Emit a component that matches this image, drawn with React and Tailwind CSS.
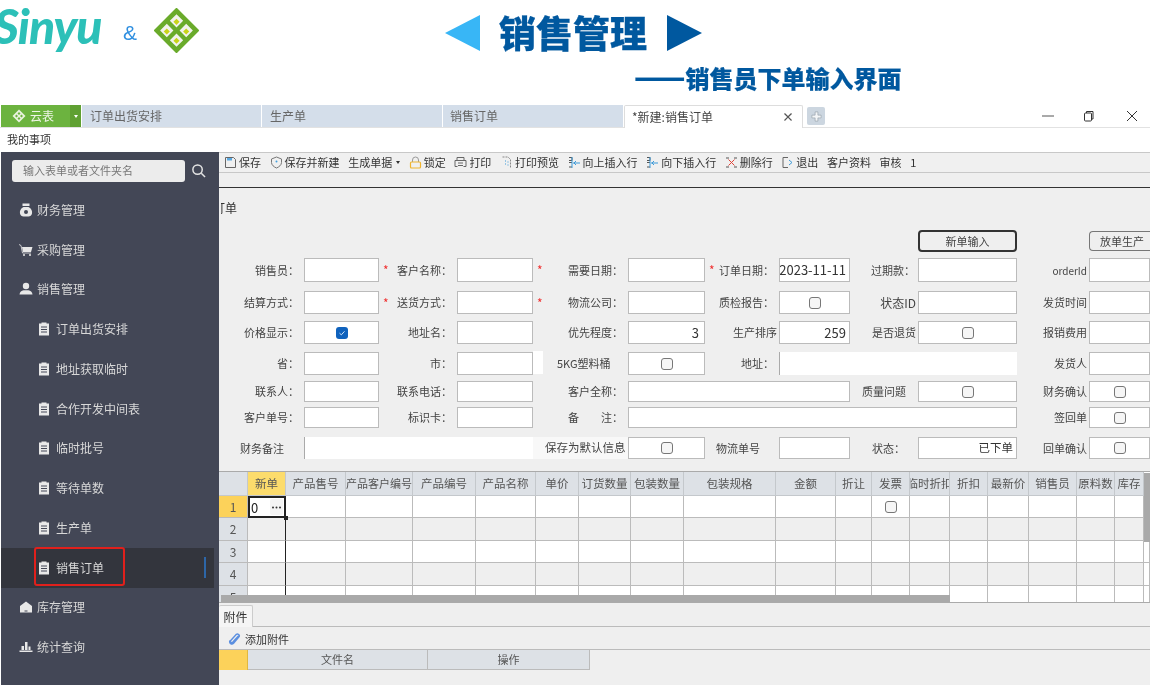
import React from "react";

const tableCols =
  "grid grid-cols-[29px_38px_60px_67px_63px_60px_43px_52px_53px_92px_60px_36px_38px_40px_38px_41px_48px_38px_29px_6px]";

const headers = ["", "新单", "产品售号", "产品客户编号", "产品编号", "产品名称", "单价", "订货数量", "包装数量", "包装规格", "金额", "折让", "发票", "临时折扣", "折扣", "最新价", "销售员", "原料数", "库存", ""];

function Check({ on }) {
  if (on) {
    return (
      <span className="flex h-[12px] w-[12px] items-center justify-center rounded-[3px] bg-[#0f62bd]">
        <svg viewBox="0 0 12 12" className="h-[10px] w-[10px]" fill="none" stroke="#cfe3f7" strokeWidth="1.2">
          <path d="M3 6.2 5.2 8.2 9 4" />
        </svg>
      </span>
    );
  }
  return <span className="block h-[12px] w-[12px] rounded-[3px] border border-[#777] bg-[#f6f6f6]" />;
}

function Label({ children, star, pad = "pr-[5px]", row = "justify-end", bg = "" }) {
  return (
    <div className={`flex h-full items-center whitespace-nowrap text-[11px] text-[#444] ${pad} ${bg} ${star ? "justify-between" : row}`}>
      {star && <span className="pl-[4px] text-[12px] leading-none text-[#f03030]">*</span>}
      <span>{children}</span>
    </div>
  );
}

function Field({ children, span = "", align = "justify-end", clean }) {
  return (
    <div
      className={`flex h-full items-center overflow-hidden bg-white whitespace-nowrap px-[3px] text-[13px] text-[#333] ${align} ${span} ${
        clean ? "border-l border-l-[#aaa]" : "border border-[#bbb]"
      }`}
    >
      {children}
    </div>
  );
}

function CheckField({ on }) {
  return (
    <Field align="justify-center">
      <Check on={on} />
    </Field>
  );
}

function Tool({ icon, children, caret }) {
  return (
    <div className="flex items-center gap-[2px] whitespace-nowrap text-[11px] text-[#333]">
      {icon}
      <span>{children}</span>
      {caret && <span className="ml-[2px] h-0 w-0 border-x-[2.5px] border-t-[3px] border-x-transparent border-t-[#333]" />}
    </div>
  );
}

const ico = "h-[13px] w-[13px] shrink-0";

const toolIcons = {
  save: (
    <svg viewBox="0 0 13 13" className={ico} fill="none">
      <path d="M1.5 1.5h8l2 2v8h-10z" stroke="#666" />
      <rect x="3" y="2" width="5" height="2.5" fill="#5aa8e0" />
    </svg>
  ),
  shield: (
    <svg viewBox="0 0 13 13" className={ico} fill="none">
      <path d="M6.5 1 11.5 3v3.5c0 2.5-2.5 4.5-5 5.5-2.5-1-5-3-5-5.5V3z" stroke="#777" />
      <circle cx="6.5" cy="5.5" r="1" fill="#45a0dc" />
    </svg>
  ),
  lock: (
    <svg viewBox="0 0 13 13" className={ico} fill="none">
      <path d="M3.5 6V4a3 3 0 0 1 6 0v2" stroke="#999" />
      <rect x="1.5" y="6" width="10" height="6" rx="1" stroke="#f0b52e" strokeWidth="1.2" />
    </svg>
  ),
  print: (
    <svg viewBox="0 0 13 13" className={ico} fill="none" stroke="#666">
      <path d="M3 4V1.5h7V4M1 4.5h11v6H9.5M1 4.5v6h2.5" />
      <path d="M4 7h5M4 9.5h5" />
    </svg>
  ),
  preview: (
    <svg viewBox="0 0 13 13" className={ico} fill="none">
      <path d="M2.5 1h5.5l2.5 2.5V12" stroke="#888" strokeDasharray="2 1" />
      <path d="M5 5h1M7.5 6h1M5 8h1M7.5 9h1" stroke="#3d9ad8" />
    </svg>
  ),
  up: (
    <svg viewBox="0 0 13 13" className={ico} fill="none">
      <path d="M1 1.5h3v3H1M1 6.5h3M1 11h3" stroke="#555" />
      <path d="M4 1v11M5 7h7M8 5 6 7l2 2" stroke="#3d9ad8" />
    </svg>
  ),
  del: (
    <svg viewBox="0 0 13 13" className={ico} fill="none">
      <path d="M1 2h3M9 2h3M1 11h3M9 11h3" stroke="#555" />
      <path d="M3.5 3.5l6 6M9.5 3.5l-6 6" stroke="#e0453a" />
    </svg>
  ),
  exit: (
    <svg viewBox="0 0 13 13" className={ico} fill="none">
      <path d="M7 1.5H2v10h5" stroke="#666" />
      <path d="M8 4l3 2.5L8 9" stroke="#3d9ad8" />
    </svg>
  ),
};

const sideIcons = {
  money: (
    <svg viewBox="0 0 14 14" className="h-[14px] w-[14px]" fill="#e8e8e8">
      <rect x="3.5" y="0.5" width="7" height="2.5" />
      <path d="M4.5 4h5c3 1.5 4 4 3.5 6.5-.3 1.8-2 3-3.5 3h-5C3 13.500 1.300 12.300 1 10.500.5 8 1.500 5.500 4.500 4z" />
      <circle cx="7" cy="9" r="2" fill="#434756" />
    </svg>
  ),
  cart: (
    <svg viewBox="0 0 14 14" className="h-[14px] w-[14px]" fill="none" stroke="#e8e8e8">
      <path d="M0 1.500 2 2.500 3.500 10H12" strokeWidth="0.8" />
      <path d="M3 4h10.500l-1.500 5H4z" fill="#e8e8e8" stroke="none" />
      <circle cx="5" cy="12" r="1" fill="#e8e8e8" stroke="none" />
      <circle cx="11" cy="12" r="1" fill="#e8e8e8" stroke="none" />
    </svg>
  ),
  user: (
    <svg viewBox="0 0 14 14" className="h-[14px] w-[14px]" fill="#e8e8e8">
      <circle cx="7" cy="4" r="3.200" />
      <path d="M0.500 12.500c.3-2.500 2-3.800 4-4.200h5c2 .4 3.700 1.700 4 4.200z" />
    </svg>
  ),
  home: (
    <svg viewBox="0 0 14 14" className="h-[14px] w-[14px]" fill="#e8e8e8">
      <path d="M7 1.500 13 6v6.500H1V6z" />
      <rect x="5.500" y="10.500" width="3" height="1" fill="#434756" />
    </svg>
  ),
  chart: (
    <svg viewBox="0 0 14 14" className="h-[14px] w-[14px]" fill="#e8e8e8">
      <rect x="0.500" y="10.500" width="13" height="1.500" />
      <rect x="2.500" y="6" width="2.500" height="4" />
      <rect x="6" y="2" width="2.500" height="8" />
      <rect x="9.500" y="6.500" width="2" height="3.500" />
    </svg>
  ),
  doc: (
    <svg viewBox="0 0 12 14" className="h-[14px] w-[12px]">
      <path d="M1 1.500h2.500V.5h5v1H11V13.500H1z" fill="#e8e8e8" />
      <path d="M3 5h6M3 7.500h6M3 10h6" stroke="#434756" strokeWidth="1" />
    </svg>
  ),
};

const menu = [
  { t: "财务管理", i: "money" },
  { t: "采购管理", i: "cart" },
  { t: "销售管理", i: "user" },
  { t: "订单出货安排", sub: true },
  { t: "地址获取临时", sub: true },
  { t: "合作开发中间表", sub: true },
  { t: "临时批号", sub: true },
  { t: "等待单数", sub: true },
  { t: "生产单", sub: true },
  { t: "销售订单", sub: true, active: true },
  { t: "库存管理", i: "home" },
  { t: "统计查询", i: "chart" },
];

function Sidebar() {
  return (
    <aside className="ml-px w-[218px] shrink-0 bg-[#434756]">
      <div className="flex h-[38px] items-center pb-px pl-[11px]">
        <div className="flex h-[22px] w-[173px] items-center rounded-[3px] bg-[#ececec] pl-[11px] text-[11px] text-[#777]">输入表单或者文件夹名</div>
        <svg viewBox="0 0 16 16" className="ml-[6px] h-[15px] w-[15px]" fill="none" stroke="#e4e4e4" strokeWidth="1.600">
          <circle cx="7" cy="7" r="5" />
          <path d="M11 11l4 4" />
        </svg>
      </div>
      {menu.map((m) => (
        <div
          key={m.t}
          className={`relative flex h-[39.75px] items-center text-[12px] text-[#d8d8d8] ${m.sub ? "pl-[37px]" : "pl-[18px]"} ${m.active ? "mr-[5px] bg-[#33353d]" : ""}`}
        >
          <span className="flex w-[18px] justify-start">{sideIcons[m.i || "doc"]}</span>
          <span>{m.t}</span>
          {m.active && (
            <>
              <span className="absolute left-[33px] top-[-1px] h-[39px] w-[91px] rounded-[3px] border-2 border-[#e0201c]" />
              <span className="absolute left-[203px] top-[9px] h-[21px] w-[2px] bg-[#2d66a8]" />
            </>
          )}
        </div>
      ))}
    </aside>
  );
}

// every child of a form row gets that row's height, the rest of the track stays empty
function Cells({ h, children }) {
  return React.Children.map(children, (c) => {
    const span = c.props.span || "";
    return <div className={`${h} ${span}`}>{c}</div>;
  });
}

function Form() {
  return (
    <div className="grid h-[241px] grid-cols-[85px_75px_78px_76px_95px_77px_74px_71px_68px_99px_72px_61px] grid-rows-[28px_33px_30px_31px_29px_26px_30px_34px]">
      {/* buttons */}
      <div className="col-start-10 h-[22px] rounded-[4px] border-2 border-[#333] text-center text-[11px] leading-[18px] text-[#444]">新单输入</div>
      <div className="col-start-12 mt-px h-[20px] rounded-l-[4px] border-y border-l border-[#777] pl-[10px] text-[11px] leading-[18px] whitespace-nowrap text-[#444]">放单生产</div>

      <Cells h="h-[24px]">
        <Label>销售员：</Label><Field />
        <Label star>客户名称：</Label><Field />
        <Label star>需要日期：</Label><Field />
        <Label star>订单日期：</Label><Field>2023-11-11</Field>
        <Label pad="pr-[3px]">过期款：</Label><Field />
        <Label pad="pr-[2px]"><span className="text-[10px]">orderId</span></Label><Field />
      </Cells>
      <Cells h="h-[23px]">
        <Label>结算方式：</Label><Field />
        <Label star>送货方式：</Label><Field />
        <Label star>物流公司：</Label><Field />
        <Label>质检报告：</Label><CheckField />
        <Label pad="pr-[2px]"><span className="text-[12px]">状态ID</span></Label><Field />
        <Label pad="pr-[2px]">发货时间</Label><Field />
      </Cells>
      <Cells h="h-[23px]">
        <Label>价格显示：</Label><CheckField on />
        <Label>地址名：</Label><Field />
        <Label>优先程度：</Label><Field><span className="pr-[2px]">3</span></Field>
        <Label pad="pr-[2px]">生产排序</Label><Field>259</Field>
        <Label pad="pr-[2px]">是否退货</Label><CheckField />
        <Label pad="pr-[2px]">报销费用</Label><Field />
      </Cells>
      <Cells h="h-[23px]">
        <Label>省：</Label><Field />
        <Label>市：</Label><Field />
        <Label row="justify-start" pad="pl-[24px]">
          <span className="relative">
            <span className="absolute -left-[24px] -top-[4px] h-[23px] w-[10px] bg-white" />
            5KG塑料桶
          </span>
        </Label>
        <CheckField />
        <Label>地址：</Label><Field span="col-span-3" clean />
        <Label pad="pr-[2px]">发货人</Label><Field />
      </Cells>
      <Cells h="h-[21px]">
        <Label>联系人：</Label><Field />
        <Label>联系电话：</Label><Field />
        <Label>客户全称：</Label><Field span="col-span-3" />
        <Label row="justify-start" pad="pl-[12px]">质量问题</Label><CheckField />
        <Label pad="pr-[2px]">财务确认</Label><CheckField />
      </Cells>
      <Cells h="h-[21px]">
        <Label>客户单号：</Label><Field />
        <Label>标识卡：</Label><Field />
        <Label><span>备</span><span className="ml-[22px]">注：</span></Label><Field span="col-span-5" />
        <Label pad="pr-[2px]">签回单</Label><CheckField />
      </Cells>
      <Cells h="h-[22px]">
        <Label row="justify-start" pad="pl-[21px]">财务备注</Label><Field span="col-span-3" clean />
        <Label row="justify-start" pad="pl-[12px]" bg="bg-[#f8f8f8]"><span className="text-[11.500px]">保存为默认信息</span></Label><CheckField />
        <Label row="justify-start" pad="pl-[11px]">物流单号</Label><Field />
        <Label row="justify-start" pad="pl-[22px]">状态：</Label><Field><span className="text-[11.500px]">已下单</span></Field>
        <Label pad="pr-[2px]">回单确认</Label><CheckField />
      </Cells>
    </div>
  );
}

function OrderTable() {
  const rows = [
    { n: "1", h: "h-[22px]", bg: "bg-white" },
    { n: "2", h: "h-[23px]", bg: "bg-[#efefef]" },
    { n: "3", h: "h-[22px]", bg: "bg-white" },
    { n: "4", h: "h-[23px]", bg: "bg-[#efefef]" },
    { n: "5", h: "h-[23px]", bg: "bg-white" },
  ];
  return (
    <div className="relative h-[132px] shrink-0 overflow-hidden border-b border-[#aaa]">
      <div className={`${tableCols} h-[25px] border-t border-[#aaa]`}>
        {headers.map((t, i) => (
          <div
            key={i}
            className={`flex items-center justify-center overflow-hidden whitespace-nowrap border-r border-b border-[#c4c8cc] text-[#555] ${i === 3 ? "text-[11px]" : "text-[11.500px]"} ${
              i === 1 ? "bg-[#fcdc6c]" : i === 19 ? "border-r-0 bg-white" : "bg-[#dde1e6]"
            }`}
          >
            {t}
          </div>
        ))}
      </div>
      {rows.map((r, ri) => (
        <div key={r.n} className={`${tableCols} ${r.h}`}>
          {headers.map((_, i) => {
            if (i === 0) {
              return (
                <div key={i} className={`flex items-center justify-center overflow-hidden border-r border-b border-[#bbb] text-[12px] text-[#555] ${ri === 0 ? "bg-[#fcd25a]" : "bg-[#dde1e6]"}`}>
                  {r.n}
                </div>
              );
            }
            if (i === 1 && ri === 0) {
              return (
                <div key={i} className="flex items-center justify-between border-2 border-[#222] bg-white px-px text-[13px] leading-none text-[#222]">
                  0
                  <span className="flex h-[16px] w-[13px] items-center justify-center rounded-[2px] bg-[#f4f4f4]">
                    <svg viewBox="0 0 11 3" className="h-[3px] w-[11px]" fill="#333">
                      <circle cx="2" cy="1.500" r="1" />
                      <circle cx="5.500" cy="1.500" r="1" />
                      <circle cx="9" cy="1.500" r="1" />
                    </svg>
                  </span>
                </div>
              );
            }
            return (
              <div key={i} className={`flex items-center justify-center border-b border-[#bbb] ${i === 19 ? "bg-white" : r.bg} ${i === 1 ? "border-r border-r-[#222]" : "border-r border-r-[#bbb]"}`}>
                {i === 12 && ri === 0 && <Check />}
              </div>
            );
          })}
        </div>
      ))}
      {/* scrollbars and the corner handle sit over the cells */}
      <span className="absolute left-[2px] top-[124px] h-[7px] w-[729px] bg-[#a9a9a9]" />
      <span className="absolute left-[925px] top-[2px] h-[69px] w-[6px] bg-[#a9a9a9]" />
      <span className="absolute left-[65px] top-[45px] h-[4px] w-[4px] bg-[#222]" />
    </div>
  );
}

function Attachments() {
  return (
    <div className="flex-1 bg-[#efefef]">
      <div className="flex h-[24px] items-end border-b border-[#bbb]">
        <div className="-mb-px flex h-[22px] w-[34px] items-center justify-center rounded-t-[2px] border-r border-t border-[#ccc] bg-[#f5f5f5] text-[12px] text-[#333]">附件</div>
      </div>
      <div className="flex h-[23px] items-center gap-[4px] border-b border-[#bbb] pl-[9px] pt-[2px] text-[11px] text-[#333]">
        <svg viewBox="0 0 14 14" className="h-[13px] w-[13px]" fill="none" stroke="#5b8fe0" strokeWidth="1.500">
          <path d="M11.500 3 5 10c-1 1-3 0-2-2l6-6.500c1.500-1 4 .5 3 2.500L6 11c-2 2-5 0-4-3" />
        </svg>
        <span>添加附件</span>
      </div>
      <div className="grid h-[20px] grid-cols-[29px_180px_162px]">
        <div className="border-r border-[#e0b840] bg-[#fcd25a]" />
        <div className="flex items-center justify-center border-r border-b border-[#bbb] bg-[#dde1e6] text-[11px] text-[#555]">文件名</div>
        <div className="flex items-center justify-center border-r border-b border-[#bbb] bg-[#dde1e6] text-[11px] text-[#555]">操作</div>
      </div>
    </div>
  );
}

export default function App() {
  return (
    <div className="h-[685px] w-[1158px] overflow-hidden bg-white font-['Noto_Sans_CJK_SC','Liberation_Sans',sans-serif] blur-[0.5px]">
      <div className="w-[1150px]">
        {/* Header */}
        <header className="h-[105px]">
          <div className="flex h-[62px] items-start">
            <div className="-ml-[6px] -mt-[5px] w-[129px] font-['Lato',sans-serif] text-[48px] leading-[62px] font-black tracking-[-1px] text-[#2cc0b8] italic">Sinyu</div>
            <div className="mt-[18px] w-[31px] font-['Liberation_Sans',sans-serif] text-[21px] leading-[30px] text-[#2f8fe0]">&amp;</div>
            <svg viewBox="0 0 44 44" className="mt-[8px] h-[45px] w-[45px] shrink-0">
              <path d="M22 1 43 22 22 43 1 22z" fill="#6aab2b" stroke="#6aab2b" strokeWidth="2" strokeLinejoin="round" />
              <path d="M22 6l6.500 6.500L22 19l-6.500-6.500zM31.500 15.500 38 22l-6.500 6.500L25 22zM22 25l6.500 6.500L22 38l-6.500-6.500zM12.500 15.500 19 22l-6.500 6.500L6 22z" fill="#f2f2ee" />
              <path d="M22 10.500l3 3-3 3-3-3zM31.500 20l3 3-3 3-3-3zM22 29l3 3-3 3-3-3zM12.500 20l3 3-3 3-3-3z" fill="#c8d418" />
            </svg>
            <div className="ml-[246px] mt-[14px] flex items-center">
              <span className="h-0 w-0 border-y-[18.500px] border-r-[35px] border-y-transparent border-r-[#38b6f6]" />
              <span className="ml-[19px] text-[37px] leading-[37px] font-black text-[#00589f] [-webkit-text-stroke:0.3px_#00589f]">销售管理</span>
              <span className="ml-[20px] h-0 w-0 border-y-[18.500px] border-l-[35px] border-y-transparent border-l-[#00589f]" />
            </div>
          </div>
          <div className="pl-[634px] text-[24px] leading-[26px] font-black whitespace-nowrap text-[#00589f] [-webkit-text-stroke:0.2px_#00589f]">
            <span className="text-[30px] leading-[26px]">——</span>销售员下单输入界面
          </div>
        </header>

        {/* Tabs */}
        <div className="flex h-[23px] items-stretch border-b border-[#e2e2e2]">
          <div className="ml-px flex w-[69px] items-center gap-[4px] bg-[#6cb33f] pl-[11px] text-[12px] text-[#eef5e6]">
            <svg viewBox="0 0 14 14" className="h-[14px] w-[14px]" fill="none">
              <path d="M7 .5 13.500 7 7 13.500.5 7z" fill="#e9f3df" />
              <path d="M7 3l1.500 1.500L7 6 5.500 4.500zM7 8l1.500 1.500L7 11 5.500 9.500zM4.500 5.500 6 7 4.500 8.500 3 7zM9.500 5.500 11 7 9.500 8.500 8 7z" fill="#6cb33f" />
            </svg>
            云表
          </div>
          <div className="flex w-[11px] items-center justify-center bg-[#5fa032]">
            <span className="h-0 w-0 border-x-[2.500px] border-t-[3px] border-x-transparent border-t-white" />
          </div>
          <div className="ml-px flex w-[179px] items-center bg-[#d4deea] pl-[8px] text-[12px] text-[#666]">订单出货安排</div>
          <div className="ml-px flex w-[180px] items-center bg-[#d4deea] pl-[8px] text-[12px] text-[#666]">生产单</div>
          <div className="ml-px flex w-[180px] items-center bg-[#d4deea] pl-[7px] text-[12px] text-[#666]">销售订单</div>
          <div className="-mb-px ml-px flex w-[179px] items-center justify-between rounded-t-[2px] border-x border-t border-[#ddd] bg-white pl-[7px] pr-[8px] text-[12px] text-[#444]">
            *新建:销售订单
            <span className="text-[12px] font-bold text-[#555]">×</span>
          </div>
          <div className="ml-[4px] mt-[2px] flex h-[18px] w-[18px] items-center justify-center rounded-[2px] bg-[#ccd6e0]">
            <svg viewBox="0 0 12 12" className="h-[11px] w-[11px]" fill="#f4f6f8" stroke="#8a949e" strokeWidth="0.600">
              <path d="M4.500 1h3v3.500H11v3H7.500V11h-3V7.500H1v-3h3.500z" />
            </svg>
          </div>
          <div className="ml-auto flex items-center pr-[12px]">
            <svg viewBox="0 0 12 12" className="h-[12px] w-[12px]" stroke="#555" fill="none"><path d="M0 6h12" /></svg>
            <svg viewBox="0 0 12 12" className="ml-[29px] h-[12px] w-[12px]" stroke="#333" fill="none"><rect x="1.500" y="3" width="7" height="8" rx="1" /><path d="M3.500 3V1.500h6.500V9H8.500" /></svg>
            <svg viewBox="0 0 12 12" className="ml-[31px] h-[12px] w-[12px]" stroke="#333" fill="none"><path d="M1 1l10 10M11 1 1 11" /></svg>
          </div>
        </div>
        <div className="flex h-[24px] items-center pb-[2px] pl-[7px] text-[11px] text-[#333]">我的事项</div>

        {/* Main */}
        <div className="flex h-[533px]">
          <Sidebar />
          <div className="flex w-[931px] flex-col bg-[#efefef]">
            <div className="flex h-[21px] shrink-0 items-center gap-[8.600px] border-y border-[#c8c8c8] bg-[#f0f0f0] pl-[5px]">
              <Tool icon={toolIcons.save}>保存</Tool>
              <Tool icon={toolIcons.shield}>保存并新建</Tool>
              <Tool caret>生成单据</Tool>
              <Tool icon={toolIcons.lock}>锁定</Tool>
              <Tool icon={toolIcons.print}>打印</Tool>
              <Tool icon={toolIcons.preview}>打印预览</Tool>
              <Tool icon={toolIcons.up}>向上插入行</Tool>
              <Tool icon={toolIcons.up}>向下插入行</Tool>
              <Tool icon={toolIcons.del}>删除行</Tool>
              <Tool icon={toolIcons.exit}>退出</Tool>
              <Tool>客户资料</Tool>
              <Tool>审核</Tool>
              <Tool>1</Tool>
            </div>
            <div className="h-[15px] shrink-0 border-b border-[#333]" />
            <div className="h-[42px] shrink-0 pt-[11px]">
              <div className="ml-[2px] w-[30px] overflow-hidden">
                <div className="-ml-[8px] text-[12px] leading-[18px] whitespace-nowrap text-[#333]">订单</div>
              </div>
            </div>
            <Form />
            <OrderTable />
            <Attachments />
          </div>
        </div>
      </div>
    </div>
  );
}
